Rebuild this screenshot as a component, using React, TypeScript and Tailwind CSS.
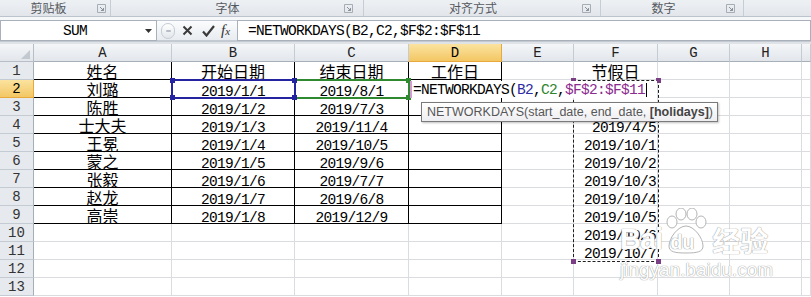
import React from 'react';

const COLS = ['A', 'B', 'C', 'D', 'E', 'F', 'G', 'H', 'I'];
const ROWS = [1, 2, 3, 4, 5, 6, 7, 8, 9, 10, 11, 12, 13];

const data: Record<string, string> = {
  A1: '姓名', B1: '开始日期', C1: '结束日期', D1: '工作日', F1: '节假日',
  A2: '刘璐', B2: '2019/1/1', C2: '2019/8/1', F2: '2019/1/1',
  A3: '陈胜', B3: '2019/1/2', C3: '2019/7/3', F3: '2019/4/4',
  A4: '士大夫', B4: '2019/1/3', C4: '2019/11/4', F4: '2019/4/5',
  A5: '王冕', B5: '2019/1/4', C5: '2019/10/5', F5: '2019/10/1',
  A6: '蒙之', B6: '2019/1/5', C6: '2019/9/6', F6: '2019/10/2',
  A7: '张毅', B7: '2019/1/6', C7: '2019/7/7', F7: '2019/10/3',
  A8: '赵龙', B8: '2019/1/7', C8: '2019/6/8', F8: '2019/10/4',
  A9: '高崇', B9: '2019/1/8', C9: '2019/12/9', F9: '2019/10/5',
  F10: '2019/10/6', F11: '2019/10/7',
};

// SimSun-ish: 8px per character
const mono = "font-['Liberation_Mono',monospace] text-[14.5px] tracking-[-0.7px]";
const cjk = "font-['Noto_Sans_CJK_SC',sans-serif] text-[16px]";

const Launcher = () => (
  <svg width="9" height="9" viewBox="0 0 9 9" className="shrink-0">
    <path d="M0.5 0.5h8v8h-8z" fill="none" stroke="#a7adb5" />
    <path d="M3 3l3.5 3.5M6.5 4v2.5H4" fill="none" stroke="#8a9099" />
  </svg>
);

const Group = ({ label, w, pad }: { label: string; w: string; pad: string }) => (
  <div className={`flex items-center h-full border-r border-[#c7cdd5] ${w}`}>
    <span className="flex-1 text-center">{label}</span>
    <div className={pad}>
      <Launcher />
    </div>
  </div>
);

const Cell = ({ col, row }: { col: string; row: number }) => {
  const v = data[col + row];
  const boxed = row <= 9 && ['A', 'B', 'C', 'D'].includes(col);
  const border = boxed ? 'border-r border-b border-black' : 'border-r border-b border-[#dadcdf]';
  const align = col === 'F' && row > 1 ? 'justify-end pr-px' : 'justify-center';
  const isCjk = !!v && /[\u4e00-\u9fff]/.test(v);
  const font = isCjk ? `${cjk} items-center` : `${mono} items-start pt-[3px]`;
  return (
    <div className={`h-[18px] flex leading-[18px] whitespace-nowrap text-black ${border} ${align} ${font}`}>
      {v}
    </div>
  );
};

const Handle = ({ pos, color }: { pos: string; color: string }) => (
  <div className={`absolute w-[5px] h-[5px] ${pos} ${color}`} />
);

const Formula = () => (
  <>
    =NETWORKDAYS(<span className="text-[#2b2ba3]">B2</span>,<span className="text-[#2e842e]">C2</span>,
    <span className="text-[#8a2c8f]">$F$2:$F$11</span>
  </>
);

export default function App() {
  return (
    <div className="w-[811px] h-[297px] overflow-hidden bg-white select-none">
      {/* ribbon group labels */}
      <div className="h-[17px] flex text-[12px] text-[#55595f] font-['Noto_Sans_CJK_SC',sans-serif] bg-linear-to-b from-[#eef1f4] to-[#e2e6eb] border-b border-[#bcc3cc]">
        <Group label="剪贴板" w="w-[111px]" pad="pr-[4px]" />
        <Group label="字体" w="w-[253px]" pad="pr-[10px]" />
        <Group label="对齐方式" w="w-[237px]" pad="pr-[9px]" />
        <Group label="数字" w="w-[143px]" pad="pr-[8px]" />
        <div className="flex-1" />
      </div>
      <div className="h-[3px] bg-[#f6f7f9]" />

      {/* formula bar */}
      <div className="h-[21px] flex bg-[#f3f5f8]">
        <div className="w-[157px] flex items-center border border-[#a9b0ba] bg-white">
          <span className={`flex-1 text-center pl-[4px] pt-[2px] ${mono}`}>SUM</span>
          <svg width="7" height="4" viewBox="0 0 7 4" className="mr-[4px]">
            <path d="M0 0h7L3.5 4z" fill="#333" />
          </svg>
        </div>
        <div className="w-[80px] flex items-center bg-linear-to-b from-[#fbfcfd] to-[#e8ecf0] border-y border-[#c4cad2]">
          <div className="ml-[4px] w-[14px] h-[16px] rounded-full border border-[#c6ccd3] bg-linear-to-b from-white to-[#e3e7eb] flex items-center justify-center">
            <div className="w-[5px] h-[2px] bg-[#b7bdc5] rounded" />
          </div>
          <svg width="11" height="11" viewBox="0 0 11 11" className="ml-[7px]">
            <path d="M1.5 1.5l8 8M9.5 1.5l-8 8" stroke="#3a3a3a" strokeWidth="2" />
          </svg>
          <svg width="13" height="12" viewBox="0 0 13 12" className="ml-[9px]">
            <path d="M1 6.5l3.5 4L12 1" fill="none" stroke="#3a3a3a" strokeWidth="2.2" />
          </svg>
          <span className="ml-[6px] italic font-['Liberation_Serif',serif] text-[15px] text-[#333] leading-none">
            f<span className="text-[11px]">x</span>
          </span>
        </div>
        <div className={`flex-1 flex items-center pl-[10px] pt-[2px] bg-white border border-[#a9b0ba] text-black ${mono}`}>
          =NETWORKDAYS(B2,C2,$F$2:$F$11
        </div>
      </div>
      <div className="h-[3px] bg-[#dfe3e8] border-t border-[#c3c9d1]" />

      {/* sheet */}
      <div className="relative">
        <div className="grid grid-cols-[34px_138px_123px_114px_93px_72px_84px_72px_72px_1fr]">
          <div className="h-[18px] relative bg-linear-to-b from-[#f4f6f8] to-[#e2e6eb] border-r border-b border-[#b7bec7]">
            <svg width="9" height="9" viewBox="0 0 9 9" className="absolute right-[3px] bottom-[2px]">
              <path d="M9 0V9H0z" fill="#c2c8d0" />
            </svg>
          </div>
          {COLS.map((c) =>
            c === 'D' ? (
              <div key={c} className="h-[18px] flex items-center justify-center leading-[18px] bg-linear-to-b from-[#fbe39f] to-[#f3c763] border-r border-b border-[#e8a93c] text-black font-['Liberation_Mono',monospace] text-[14px]">
                {c}
              </div>
            ) : (
              <div key={c} className="h-[18px] flex items-center justify-center leading-[18px] bg-linear-to-b from-[#f4f6f8] to-[#e2e6eb] border-r border-b border-[#c5cbd3] border-b-[#a7afb9] text-[#222] font-['Liberation_Mono',monospace] text-[14px]">
                {c === 'I' ? '' : c}
              </div>
            )
          )}
          {ROWS.map((r) => (
            <React.Fragment key={r}>
              {r === 2 ? (
                <div className="h-[18px] flex items-center justify-center leading-[18px] bg-linear-to-b from-[#fbe39f] to-[#f3c763] border-r border-b border-[#e8a93c] text-black font-['Liberation_Mono',monospace] text-[14px]">
                  {r}
                </div>
              ) : (
                <div className="h-[18px] flex items-center justify-center leading-[18px] bg-[#e6e9ed] border-r border-b border-[#c5cbd3] border-r-[#a7afb9] text-[#333] font-['Liberation_Mono',monospace] text-[14px]">
                  {r}
                </div>
              )}
              {COLS.map((c) => (
                <Cell key={c} col={c} row={r} />
              ))}
            </React.Fragment>
          ))}
        </div>

        {/* copy range F2:F11 */}
        <div className="absolute left-[573px] top-[36px] w-[86px] h-[182px] border border-dashed border-[#1e1e1e]">
          <Handle pos="-left-[3px] -top-[3px]" color="bg-[#7b3f86]" />
          <Handle pos="-right-[3px] -top-[3px]" color="bg-[#7b3f86]" />
          <Handle pos="-left-[3px] -bottom-[3px]" color="bg-[#7b3f86]" />
          <Handle pos="-right-[3px] -bottom-[3px]" color="bg-[#7b3f86]" />
        </div>

        {/* C2 reference */}
        <div className="absolute left-[294px] top-[35px] w-[116px] h-[20px] border-2 border-[#2f8a2f]">
          <Handle pos="-right-[3px] -top-[3px]" color="bg-[#2f8a2f]" />
          <Handle pos="-right-[3px] -bottom-[3px]" color="bg-[#2f8a2f]" />
        </div>
        {/* B2 reference */}
        <div className="absolute left-[171px] top-[35px] w-[125px] h-[20px] border-2 border-[#2424a0]">
          <Handle pos="-left-[3px] -top-[3px]" color="bg-[#2424a0]" />
          <Handle pos="-right-[3px] -top-[3px]" color="bg-[#2424a0]" />
          <Handle pos="-left-[3px] -bottom-[3px]" color="bg-[#2424a0]" />
          <Handle pos="-right-[3px] -bottom-[3px]" color="bg-[#2424a0]" />
        </div>

        {/* D2 in edit mode */}
        <div className={`absolute left-[410px] top-[37px] w-[247px] h-[17px] bg-white border-l-2 border-[#d59bd5] flex items-start pt-[2px] pl-[1px] text-black leading-[15px] whitespace-nowrap ${mono}`}>
          <Formula />
          <div className="w-px h-[14px] bg-black ml-[1px]" />
        </div>

        {/* function tooltip */}
        <div className="absolute left-[421px] top-[58px] w-[297px] h-[20px] flex items-center px-[5px] bg-linear-to-b from-white to-[#eeeef2] border border-[#7a7a7a] shadow-[1px_1px_2px_rgba(0,0,0,0.25)] font-['Liberation_Sans',sans-serif] text-[12.5px] text-[#575757] whitespace-pre">
          NETWORKDAYS(start_date, end_date, <b className="text-[#444]">[holidays]</b>)
        </div>

        {/* watermark */}
        <div className="absolute left-[620px] top-[164px] pointer-events-none text-white [text-shadow:0_0_1px_#9c9c9c,0_0_1px_#9c9c9c]">
          <div className="flex items-end h-[46px]">
            <span className="font-['Liberation_Sans',sans-serif] font-bold text-[29px] leading-none tracking-[-1px]">Bai</span>
            <div className="relative w-[44px] h-[46px] ml-[2px]">
              <svg width="44" height="46" viewBox="0 0 44 46" className="absolute inset-0">
                <g fill="#fff" stroke="#b4b4b4" strokeWidth="1">
                  <ellipse cx="8" cy="14" rx="5" ry="6" />
                  <ellipse cx="17" cy="6" rx="5" ry="6" />
                  <ellipse cx="28" cy="6" rx="5" ry="6" />
                  <ellipse cx="37" cy="14" rx="5" ry="6" />
                  <path d="M22 18c-8 0-17 12-17 20 0 6 6 7 17 7s17-1 17-7c0-8-9-20-17-20z" />
                </g>
              </svg>
              <span className="absolute left-[6px] bottom-[2px] font-['Liberation_Sans',sans-serif] font-bold text-[20px] leading-none text-white [text-shadow:0_0_1px_#8c8c8c,0_0_1px_#8c8c8c]">du</span>
            </div>
            <span className="ml-[4px] font-['Noto_Sans_CJK_SC',sans-serif] font-bold text-[28px] leading-none">经验</span>
          </div>
          <div className="mt-[6px] font-['Liberation_Sans',sans-serif] text-[19px] leading-none">jingyan.baidu.com</div>
        </div>
      </div>
    </div>
  );
}
